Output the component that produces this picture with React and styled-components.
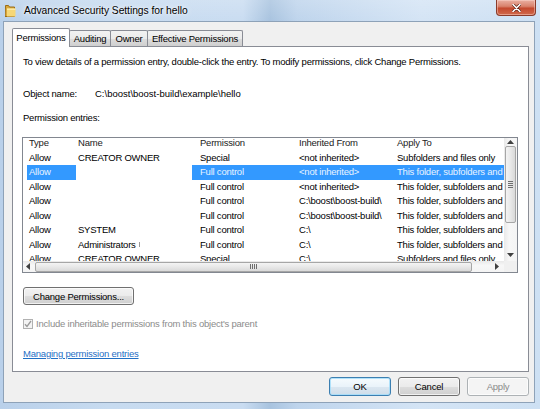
import React from "react";
import styled, { createGlobalStyle } from "styled-components";

const GlobalStyle = createGlobalStyle`
  html, body {
    margin: 0;
    padding: 0;
  }
  body {
    width: 540px;
    height: 409px;
    overflow: hidden;
    font-family: "Liberation Sans", Arial, sans-serif;
    font-size: 9.5px;
    letter-spacing: -0.22px;
    color: #000;
  }
`;

const Window = styled.div`
  width: 540px;
  height: 409px;
  box-sizing: border-box;
  display: flex;
  flex-direction: column;
  padding: 0 5px 6px 3px;
  background:
    linear-gradient(180deg, rgba(255, 255, 255, 0.18) 0%, rgba(255, 255, 255, 0) 22px),
    linear-gradient(90deg, #b9d0ea 0%, #c7dbf0 20%, #c9dcf1 45%, #a8c3df 50%, #bed4ec 55%, #d4e4f5 78%, #cde0f3 100%);
`;

const TitleBar = styled.div`
  height: 21px;
  display: flex;
  align-items: center;
`;

const FolderIcon = styled.svg`
  margin-left: 2px;
  flex: none;
`;

const Title = styled.span`
  margin-left: 8px;
  font-size: 10.3px;
  letter-spacing: -0.05px;
  color: #000;
  text-shadow: 0 0 6px rgba(255, 255, 255, 0.95), 0 0 2px rgba(255, 255, 255, 0.9);
`;

const CloseButton = styled.div`
  align-self: flex-start;
  margin-left: auto;
  margin-right: -1px;
  width: 40px;
  height: 16px;
  box-sizing: border-box;
  display: flex;
  align-items: center;
  justify-content: center;
  border: 1px solid #8a3b2a;
  border-top: none;
  border-radius: 0 0 4px 4px;
  background: linear-gradient(180deg, #eab0a2 0%, #d9826c 42%, #c4492e 55%, #d06a4c 100%);
  box-shadow: inset 0 0 0 1px rgba(255, 220, 210, 0.45);
`;

const Client = styled.div`
  flex: 1;
  display: flex;
  flex-direction: column;
  background: #f0f0f0;
  border: 1px solid #8ea2b8;
  padding: 6px 5px 6px 8px;
  min-height: 0;
`;

const TabRow = styled.div`
  position: relative;
  z-index: 1;
  height: 19px;
  margin-bottom: -1px;
  display: flex;
  align-items: flex-start;
`;

const Tab = styled.div`
  position: relative;
  width: ${(p) => p.$w}px;
  height: ${(p) => (p.$active ? 19 : 16)}px;
  margin-top: ${(p) => (p.$active ? 0 : 2)}px;
  margin-left: ${(p) => (p.$first ? 0 : -1)}px;
  z-index: ${(p) => (p.$active ? 2 : 1)};
  box-sizing: border-box;
  border: 1px solid #898c95;
  border-bottom: none;
  border-radius: 2px 2px 0 0;
  background: ${(p) =>
    p.$active ? "#ffffff" : "linear-gradient(180deg, #f2f2f2 0%, #ebebeb 50%, #dddddd 51%, #cfcfcf 100%)"};
  display: flex;
  align-items: ${(p) => (p.$active ? "flex-start" : "center")};
  padding-top: ${(p) => (p.$active ? 3 : 0)}px;
  justify-content: center;
  white-space: nowrap;
`;

const Panel = styled.div`
  flex: 1;
  display: flex;
  flex-direction: column;
  background: #ffffff;
  border: 1px solid #898c95;
  padding: 9px 10px 0 10px;
  min-height: 0;
`;

const Line = styled.div`
  line-height: 12px;
  height: 12px;
  margin-top: ${(p) => p.$mt || 0}px;
  white-space: nowrap;
  display: flex;
  align-items: center;
  color: ${(p) => (p.$muted ? "#8c8c8c" : "#000")};
`;

const FieldLabel = styled.span`
  width: 72px;
  flex: none;
`;

const PathText = styled.span`
  letter-spacing: 0;
`;

const ListBox = styled.div`
  margin: 13px 0 0 -1px;
  width: 496px;
  height: 136px;
  box-sizing: border-box;
  border: 1px solid #828790;
  display: grid;
  grid-template-columns: 1fr 13px;
  grid-template-rows: 1fr 11px;
  background: #fff;
`;

const ListContent = styled.div`
  overflow: hidden;
  padding-left: 4px;
`;

const Row = styled.div`
  display: grid;
  grid-template-columns: 49px 116px 99px 99px 140px;
  height: ${(p) => (p.$header ? 12.5 : 14.5)}px;
  line-height: 12px;
  white-space: nowrap;
  color: ${(p) => (p.$selected ? "#e8f3ff" : p.$header ? "#222" : "#000")};
`;

const Cell = styled.div`
  height: 100%;
  display: flex;
  align-items: ${(p) => (p.$header ? "flex-start" : "center")};
  padding-left: ${(p) => p.$pl}px;
  margin-top: ${(p) => (p.$header ? -1 : 0)}px;
  overflow: hidden;
  background: ${(p) => (p.$blank ? "#ffffff" : p.$selected ? "#3399ff" : "transparent")};
`;

const Tick = styled.span`
  display: inline-block;
  width: 1px;
  height: 5px;
  margin-left: 3px;
  background: #9a9a9a;
`;

const VScroll = styled.div`
  display: flex;
  flex-direction: column;
  align-items: center;
  background: linear-gradient(90deg, #e9e9e9 0%, #f7f7f7 40%, #f4f4f4 100%);
`;

const HScroll = styled.div`
  display: flex;
  align-items: center;
  background: linear-gradient(180deg, #e9e9e9 0%, #f7f7f7 40%, #f4f4f4 100%);
`;

const Corner = styled.div`
  background: #f0f0f0;
`;

const ArrowBox = styled.div`
  flex: none;
  display: flex;
  align-items: center;
  justify-content: center;
  width: ${(p) => p.$w || 13}px;
  height: ${(p) => p.$h || 11}px;
`;

const Thumb = styled.div`
  flex: none;
  box-sizing: border-box;
  display: flex;
  align-items: center;
  justify-content: center;
  border: 1px solid #a6a6a6;
  border-radius: 2px;
  ${(p) =>
    p.$vertical
      ? `width: 11px; height: ${p.$len}px; background: linear-gradient(90deg, #f4f4f4 0%, #e8e8e8 50%, #d9d9d9 100%);`
      : `height: 10px; width: ${p.$len}px; margin-left: ${p.$offset || 0}px; background: linear-gradient(180deg, #f4f4f4 0%, #e8e8e8 50%, #d9d9d9 100%);`}
`;

const Spacer = styled.div`
  flex: 1;
`;

const Button = styled.button`
  width: ${(p) => p.$w}px;
  height: ${(p) => p.$h || 19}px;
  box-sizing: border-box;
  padding: 0;
  font: inherit;
  letter-spacing: inherit;
  color: ${(p) => (p.$disabled ? "#8a8a8a" : "#000")};
  border-radius: 3px;
  border: 1px solid ${(p) => (p.$default ? "#3c7fb1" : p.$disabled ? "#adb2b5" : "#707070")};
  background: ${(p) =>
    p.$disabled
      ? "#f4f4f4"
      : p.$default
      ? "linear-gradient(180deg, #f6fbfe 0%, #eaf3fa 50%, #dbe7f1 51%, #cfdde9 100%)"
      : "linear-gradient(180deg, #f2f2f2 0%, #ebebeb 50%, #dddddd 51%, #cfcfcf 100%)"};
  box-shadow: inset 0 0 0 1px ${(p) => (p.$default ? "rgba(160, 220, 250, 0.8)" : "rgba(255, 255, 255, 0.7)")};
  margin-top: ${(p) => p.$mt || 0}px;
  align-self: flex-start;
  cursor: default;
`;

const CheckBox = styled.div`
  width: 10px;
  height: 10px;
  box-sizing: border-box;
  border: 1px solid #b1b1b1;
  background: #f4f4f4;
  margin-right: 3px;
  display: flex;
  align-items: center;
  justify-content: center;
  flex: none;
`;

const Link = styled.a`
  color: #1f6fc5;
  text-decoration: underline;
`;

const ButtonRow = styled.div`
  margin-top: 5px;
  height: 19px;
  display: flex;
  justify-content: flex-end;
  gap: 7px;
`;

const rows = [
  { type: "Allow", name: "CREATOR OWNER", perm: "Special", from: "<not inherited>", apply: "Subfolders and files only" },
  { type: "Allow", name: "", perm: "Full control", from: "<not inherited>", apply: "This folder, subfolders and files", selected: true },
  { type: "Allow", name: "", perm: "Full control", from: "<not inherited>", apply: "This folder, subfolders and files" },
  { type: "Allow", name: "", perm: "Full control", from: "C:\\boost\\boost-build\\", apply: "This folder, subfolders and files" },
  { type: "Allow", name: "", perm: "Full control", from: "C:\\boost\\boost-build\\", apply: "This folder, subfolders and files" },
  { type: "Allow", name: "SYSTEM", perm: "Full control", from: "C:\\", apply: "This folder, subfolders and files" },
  { type: "Allow", name: "Administrators", perm: "Full control", from: "C:\\", apply: "This folder, subfolders and files", tick: true },
  { type: "Allow", name: "CREATOR OWNER", perm: "Special", from: "C:\\", apply: "Subfolders and files only" },
];

const pads = [2, 2, 8, 8, 7];

function Triangle({ dir }) {
  const pts = {
    up: "0,4 3.5,0 7,4",
    down: "0,0 3.5,4 7,0",
    left: "4,0 0,3.5 4,7",
    right: "0,0 4,3.5 0,7",
  }[dir];
  const vertical = dir === "up" || dir === "down";
  return (
    <svg width={vertical ? 7 : 4} height={vertical ? 4 : 7} viewBox={vertical ? "0 0 7 4" : "0 0 4 7"}>
      <polygon points={pts} fill="#404040" />
    </svg>
  );
}

function Grip({ vertical }) {
  return vertical ? (
    <svg width="5" height="7" viewBox="0 0 5 7">
      {[0.5, 2.5, 4.5, 6.5].map((y) => (
        <line key={y} x1="0" x2="5" y1={y} y2={y} stroke="#6e6e6e" strokeWidth="1" />
      ))}
    </svg>
  ) : (
    <svg width="7" height="5" viewBox="0 0 7 5">
      {[0.5, 2.5, 4.5, 6.5].map((x) => (
        <line key={x} y1="0" y2="5" x1={x} x2={x} stroke="#6e6e6e" strokeWidth="1" />
      ))}
    </svg>
  );
}

function EntryRow({ row }) {
  const cells = [row.type, row.name, row.perm, row.from, row.apply];
  return (
    <Row $selected={row.selected}>
      {cells.map((c, i) => (
        <Cell key={i} $pl={pads[i]} $selected={row.selected} $blank={i === 1 && !row.name}>
          {c}
          {i === 1 && row.tick && <Tick />}
        </Cell>
      ))}
    </Row>
  );
}

export default function App() {
  return (
    <>
      <GlobalStyle />
      <Window>
        <TitleBar>
          <FolderIcon width="11" height="13" viewBox="0 0 11 13">
            <path d="M0.5 1.5h3l1 1.5h5v9.5h-9.5z" fill="#d9a83c" stroke="#9a6c18" strokeWidth="1" />
            <path d="M2 4.5h8.5v8h-8.5z" fill="#f6d777" />
            <path d="M2 4.5h8.5v1.5h-8.5z" fill="#fbe9a8" />
          </FolderIcon>
          <Title>Advanced Security Settings for hello</Title>
          <CloseButton>
            <svg width="9" height="8" viewBox="0 0 9 8">
              <path d="M1 0.5 L8 7.5 M8 0.5 L1 7.5" stroke="#5b2216" strokeWidth="3" strokeLinecap="round" />
              <path d="M1 0.5 L8 7.5 M8 0.5 L1 7.5" stroke="#ffffff" strokeWidth="1.6" strokeLinecap="round" />
            </svg>
          </CloseButton>
        </TitleBar>

        <Client>
          <TabRow>
            <Tab $w={58} $first $active>Permissions</Tab>
            <Tab $w={42}>Auditing</Tab>
            <Tab $w={38}>Owner</Tab>
            <Tab $w={96}>Effective Permissions</Tab>
          </TabRow>

          <Panel>
            <Line>
              To view details of a permission entry, double-click the entry. To modify permissions, click Change Permissions.
            </Line>
            <Line $mt={20}>
              <FieldLabel>Object name:</FieldLabel>
              <PathText>C:\boost\boost-build\example\hello</PathText>
            </Line>
            <Line $mt={12}>Permission entries:</Line>

            <ListBox>
              <ListContent>
                <Row $header>
                  {["Type", "Name", "Permission", "Inherited From", "Apply To"].map((h, i) => (
                    <Cell key={h} $header $pl={pads[i]}>
                      {h}
                    </Cell>
                  ))}
                </Row>
                {rows.map((r, i) => (
                  <EntryRow key={i} row={r} />
                ))}
              </ListContent>
              <VScroll>
                <ArrowBox $h={8}>
                  <Triangle dir="up" />
                </ArrowBox>
                <Thumb $vertical $len={77}>
                  <Grip vertical />
                </Thumb>
                <Spacer />
                <ArrowBox $h={12}>
                  <Triangle dir="down" />
                </ArrowBox>
              </VScroll>
              <HScroll>
                <ArrowBox $w={10}>
                  <Triangle dir="left" />
                </ArrowBox>
                <Thumb $len={437} $offset={2}>
                  <Grip />
                </Thumb>
                <Spacer />
                <ArrowBox $w={14}>
                  <Triangle dir="right" />
                </ArrowBox>
              </HScroll>
              <Corner />
            </ListBox>

            <Button $w={111} $h={18} $mt={14}>Change Permissions...</Button>

            <Line $mt={13} $muted>
              <CheckBox>
                <svg width="8" height="8" viewBox="0 0 8 8">
                  <path d="M1 4.2 L3 6.5 L7 1" fill="none" stroke="#9a9a9a" strokeWidth="1.3" />
                </svg>
              </CheckBox>
              Include inheritable permissions from this object's parent
            </Line>

            <Line $mt={18}>
              <Link href="#">Managing permission entries</Link>
            </Line>
          </Panel>

          <ButtonRow>
            <Button $w={62} $default>OK</Button>
            <Button $w={62}>Cancel</Button>
            <Button $w={62} $disabled>Apply</Button>
          </ButtonRow>
        </Client>
      </Window>
    </>
  );
}
